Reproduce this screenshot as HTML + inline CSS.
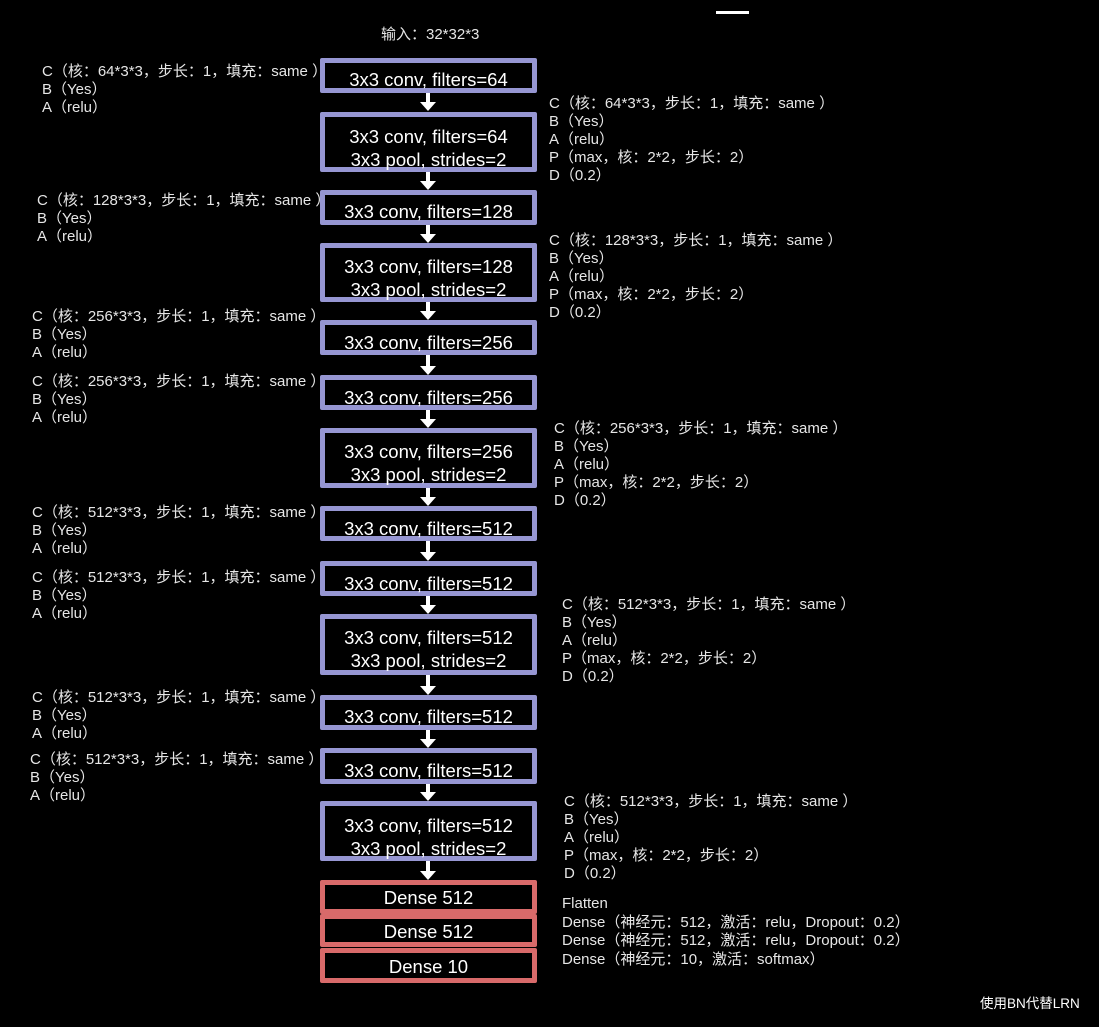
<!DOCTYPE html>
<html><head><meta charset="utf-8"><style>
body{margin:0;width:1099px;height:1027px;background:#000;position:relative;overflow:hidden;font-family:"Liberation Sans","Noto Sans CJK SC",sans-serif;color:#e6e6e6}
.t{position:absolute;font-size:15px;line-height:18px;white-space:nowrap}
.b{position:absolute;left:320px;width:207px;border:5px solid #9696d2;border-radius:2px;color:#fff;font-size:18.5px;text-align:center;line-height:23px;background:#000}
.r{border-color:#d86a6a}
.a{position:absolute;left:426px;width:4px;background:#fff}
.h{position:absolute;left:420px;width:0;height:0;border-left:8px solid transparent;border-right:8px solid transparent;border-top:9px solid #fff}
</style></head><body>
<div class="t" style="left:381px;top:26px">输入：32*32*3</div>
<div style="position:absolute;left:716px;top:11px;width:33px;height:3px;background:#fff"></div>

<div class="b" style="top:58px;height:25px"><div style="padding-top:9px;line-height:16px">3x3 conv, filters=64</div></div>
<div class="b" style="top:112px;height:50px"><div style="padding-top:8px">3x3 conv, filters=64<br>3x3 pool, strides=2</div></div>
<div class="b" style="top:190px;height:25px"><div style="padding-top:9px;line-height:16px">3x3 conv, filters=128</div></div>
<div class="b" style="top:243px;height:49px"><div style="padding-top:7px">3x3 conv, filters=128<br>3x3 pool, strides=2</div></div>
<div class="b" style="top:320px;height:25px"><div style="padding-top:10px;line-height:16px">3x3 conv, filters=256</div></div>
<div class="b" style="top:375px;height:25px"><div style="padding-top:10px;line-height:16px">3x3 conv, filters=256</div></div>
<div class="b" style="top:428px;height:50px"><div style="padding-top:7px">3x3 conv, filters=256<br>3x3 pool, strides=2</div></div>
<div class="b" style="top:506px;height:25px"><div style="padding-top:10px;line-height:16px">3x3 conv, filters=512</div></div>
<div class="b" style="top:561px;height:25px"><div style="padding-top:10px;line-height:16px">3x3 conv, filters=512</div></div>
<div class="b" style="top:614px;height:51px"><div style="padding-top:7px">3x3 conv, filters=512<br>3x3 pool, strides=2</div></div>
<div class="b" style="top:695px;height:25px"><div style="padding-top:9px;line-height:16px">3x3 conv, filters=512</div></div>
<div class="b" style="top:748px;height:26px"><div style="padding-top:10px;line-height:16px">3x3 conv, filters=512</div></div>
<div class="b" style="top:801px;height:50px"><div style="padding-top:8px">3x3 conv, filters=512<br>3x3 pool, strides=2</div></div>
<div class="b r" style="top:880px;height:24px;line-height:26px">Dense 512</div>
<div class="b r" style="top:914px;height:23px;line-height:26px">Dense 512</div>
<div class="b r" style="top:948px;height:25px;line-height:28px">Dense 10</div>

<div class="a" style="top:93px;height:10px"></div><div class="h" style="top:102px"></div>
<div class="a" style="top:172px;height:9px"></div><div class="h" style="top:181px"></div>
<div class="a" style="top:225px;height:9px"></div><div class="h" style="top:234px"></div>
<div class="a" style="top:302px;height:9px"></div><div class="h" style="top:311px"></div>
<div class="a" style="top:355px;height:11px"></div><div class="h" style="top:366px"></div>
<div class="a" style="top:410px;height:9px"></div><div class="h" style="top:419px"></div>
<div class="a" style="top:488px;height:9px"></div><div class="h" style="top:497px"></div>
<div class="a" style="top:541px;height:11px"></div><div class="h" style="top:552px"></div>
<div class="a" style="top:596px;height:9px"></div><div class="h" style="top:605px"></div>
<div class="a" style="top:675px;height:11px"></div><div class="h" style="top:686px"></div>
<div class="a" style="top:730px;height:9px"></div><div class="h" style="top:739px"></div>
<div class="a" style="top:784px;height:8px"></div><div class="h" style="top:792px"></div>
<div class="a" style="top:861px;height:10px"></div><div class="h" style="top:871px"></div>

<div class="t" style="left:42px;top:63px">C（核：64*3*3，步长：1，填充：same ）<br>B（Yes）<br>A（relu）</div>
<div class="t" style="left:37px;top:192px">C（核：128*3*3，步长：1，填充：same ）<br>B（Yes）<br>A（relu）</div>
<div class="t" style="left:32px;top:308px">C（核：256*3*3，步长：1，填充：same ）<br>B（Yes）<br>A（relu）</div>
<div class="t" style="left:32px;top:373px">C（核：256*3*3，步长：1，填充：same ）<br>B（Yes）<br>A（relu）</div>
<div class="t" style="left:32px;top:504px">C（核：512*3*3，步长：1，填充：same ）<br>B（Yes）<br>A（relu）</div>
<div class="t" style="left:32px;top:569px">C（核：512*3*3，步长：1，填充：same ）<br>B（Yes）<br>A（relu）</div>
<div class="t" style="left:32px;top:689px">C（核：512*3*3，步长：1，填充：same ）<br>B（Yes）<br>A（relu）</div>
<div class="t" style="left:30px;top:751px">C（核：512*3*3，步长：1，填充：same ）<br>B（Yes）<br>A（relu）</div>

<div class="t" style="left:549px;top:95px">C（核：64*3*3，步长：1，填充：same ）<br>B（Yes）<br>A（relu）<br>P（max，核：2*2，步长：2）<br>D（0.2）</div>
<div class="t" style="left:549px;top:232px">C（核：128*3*3，步长：1，填充：same ）<br>B（Yes）<br>A（relu）<br>P（max，核：2*2，步长：2）<br>D（0.2）</div>
<div class="t" style="left:554px;top:420px">C（核：256*3*3，步长：1，填充：same ）<br>B（Yes）<br>A（relu）<br>P（max，核：2*2，步长：2）<br>D（0.2）</div>
<div class="t" style="left:562px;top:596px">C（核：512*3*3，步长：1，填充：same ）<br>B（Yes）<br>A（relu）<br>P（max，核：2*2，步长：2）<br>D（0.2）</div>
<div class="t" style="left:564px;top:793px">C（核：512*3*3，步长：1，填充：same ）<br>B（Yes）<br>A（relu）<br>P（max，核：2*2，步长：2）<br>D（0.2）</div>
<div class="t" style="left:562px;top:895px;line-height:18.7px">Flatten<br>Dense（神经元：512，激活：relu，Dropout：0.2）<br>Dense（神经元：512，激活：relu，Dropout：0.2）<br>Dense（神经元：10，激活：softmax）</div>
<div class="t" style="left:980px;top:995px;font-size:13.5px;color:#fff">使用BN代替LRN</div>
</body></html>
